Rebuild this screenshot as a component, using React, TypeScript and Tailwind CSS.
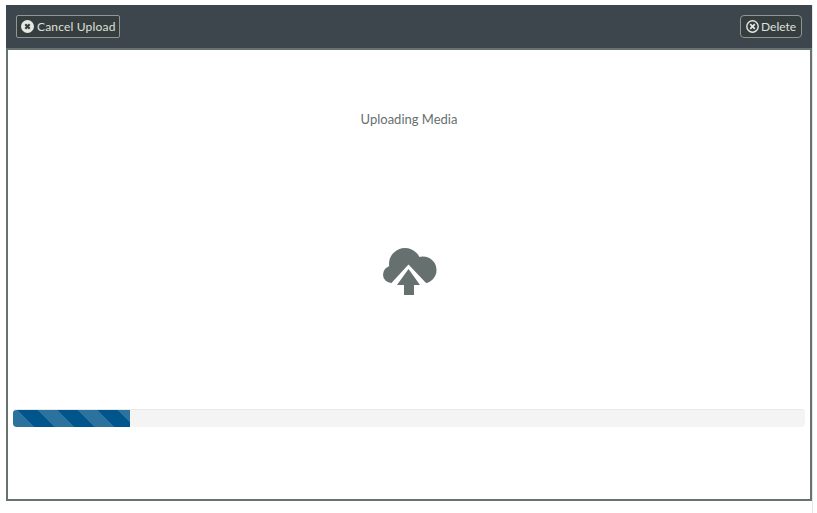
export default function App() {
  return (
    <div className="w-[817px] h-[513px] bg-white pt-[5px] pl-[6px] font-['Lato',sans-serif] overflow-hidden">
      <div className="w-[807px] h-[513px] border-r border-[#e6e6e6]">
        <div className="w-[806px] h-[496px] border-2 border-t-0 border-[#66736f] flex flex-col box-border">
          <header className="h-[45px] -mx-[2px] bg-[#3d464c] border-b-2 border-[#66736f] flex items-center justify-between pl-[10px] pr-[10px] shrink-0">
            <button className="w-[104px] h-[23px] flex items-center gap-[3px] pl-[4px] border border-[#8d9893] bg-[#363d3e] text-[#dfe0da] text-[12px] tracking-[0.18px] rounded-[2px] whitespace-nowrap">
              <svg width="13" height="13" viewBox="0 0 13 13"><circle cx="6.500" cy="6.500" r="6.500" fill="#e8e8e2" /><path d="M4.300 4.300l4.400 4.400M8.700 4.300l-4.400 4.400" stroke="#363d3e" strokeWidth="2.200" /></svg>
              Cancel Upload
            </button>
            <button className="w-[62px] h-[23px] flex items-center gap-[2px] pl-[5px] border border-[#8d9893] bg-[#363d3e] text-[#dfe0da] text-[12px] rounded-[4px] whitespace-nowrap">
              <svg width="13" height="13" viewBox="0 0 13 13"><circle cx="6.500" cy="6.500" r="5.700" fill="none" stroke="#e8e8e2" strokeWidth="1.400" /><path d="M4.200 4.200l4.600 4.600M8.800 4.200l-4.600 4.600" stroke="#e8e8e2" strokeWidth="1.700" /></svg>
              Delete
            </button>
          </header>
          <main className="flex-1 flex flex-col items-center">
            <p className="mt-[60px] text-[13px] leading-[18px] text-[#66706f]">Uploading Media</p>
            <svg className="mt-[119px]" width="56" height="49" viewBox="381 247 56 49">
              <circle cx="405" cy="264" r="16" fill="#66706f" />
              <circle cx="423" cy="270" r="13.500" fill="#66706f" />
              <circle cx="391.500" cy="274.500" r="8.500" fill="#66706f" />
              <rect x="391" y="268" width="32" height="15.500" fill="#66706f" />
              <path d="M390.500 284 408.500 264.500 427 284z" fill="#fff" />
              <path d="M408.500 269 397 285h7v10h10V285h6z" fill="#66706f" />
            </svg>
            <div className="mt-[113px] w-[792px] h-[18px] bg-[#f4f4f4] border-t border-[#e8e8e8] rounded-[4px] overflow-hidden">
              <div className="w-[117px] h-[18px] -mt-px bg-[#00558c] bg-[linear-gradient(45deg,rgba(255,255,255,0.17)_25%,transparent_25%,transparent_50%,rgba(255,255,255,0.17)_50%,rgba(255,255,255,0.17)_75%,transparent_75%,transparent)] bg-[length:40px_40px] bg-[position:24px_0px]" />
            </div>
          </main>
        </div>
      </div>
    </div>
  );
}
